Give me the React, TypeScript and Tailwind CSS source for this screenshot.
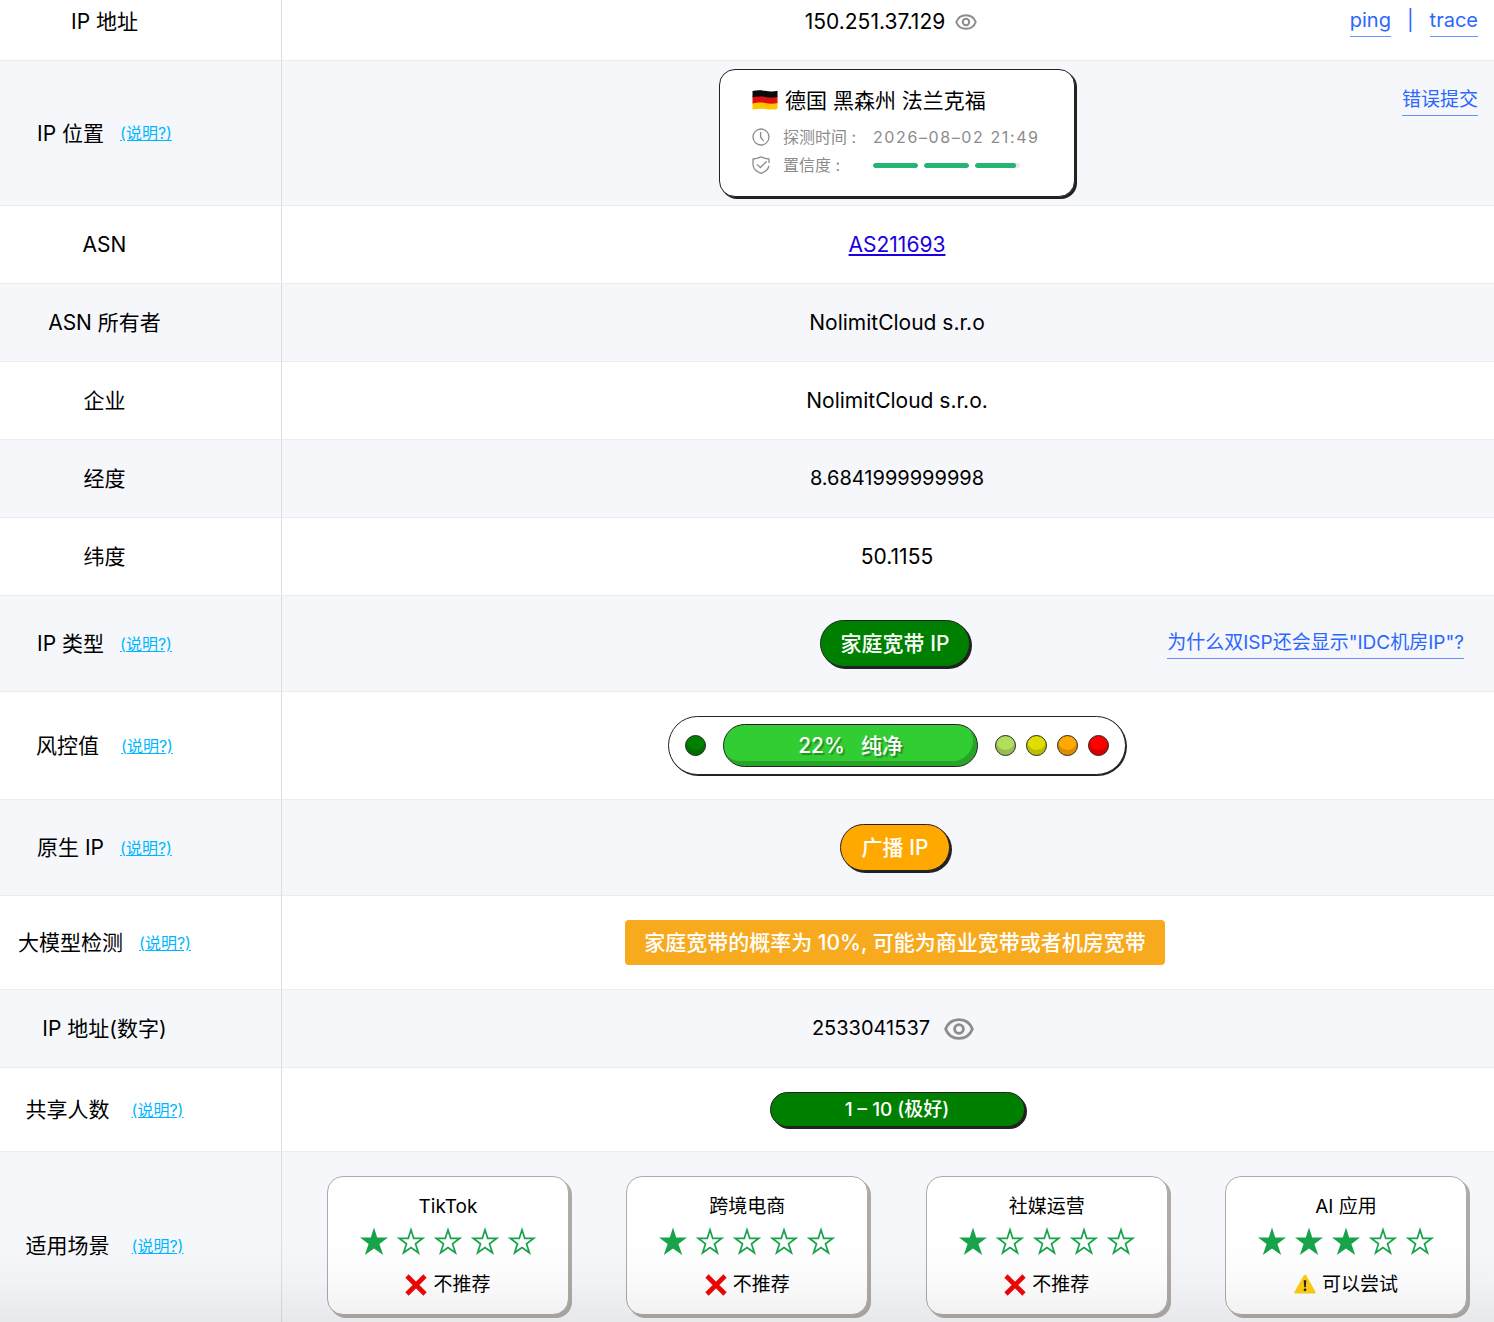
import type { ReactNode } from 'react';
import clsx from 'clsx';

interface RowProps {
  label: string;
  help?: boolean;
  wideGap?: boolean;
  cellClass?: string;
  aside?: ReactNode;
  children: ReactNode;
}

interface Scene {
  name: string;
  stars: number;
  recommended: boolean;
  verdict: string;
}

const SCENES: Scene[] = [
  { name: 'TikTok', stars: 1, recommended: false, verdict: '不推荐' },
  { name: '跨境电商', stars: 1, recommended: false, verdict: '不推荐' },
  { name: '社媒运营', stars: 1, recommended: false, verdict: '不推荐' },
  { name: 'AI 应用', stars: 3, recommended: true, verdict: '可以尝试' },
];

// Confidence segments, in percent
const CONFIDENCE = [100, 100, 92];

const RISK_DOTS = ['bg-[#b2dd5e]', 'bg-[#dede00]', 'bg-[#ffa800]', 'bg-[#ff0000]'];

const FILLED_STAR = 'M14 .6 17.2 10.500H28L19.400 16.900 23.200 28 14 21.600 4.800 28 8.600 16.900 0 10.500H10.800Z';
const HOLLOW_STAR = 'M14 2.800 16.700 11.300H25.800L18.500 16.700 21.400 25.800 14 20.500 6.600 25.800 9.500 16.700 2.200 11.300H11.300Z';

function EyeIcon({ className }: { className: string }) {
  return (
    <svg viewBox="0 0 30 22" className={className} fill="none" stroke="#8c8c8c" strokeWidth="2.800">
      <path d="M1.600 11C4 4.800 9 1.600 15 1.600S26 4.800 28.400 11C26 17.200 21 20.400 15 20.400S4 17.200 1.600 11Z" />
      <circle cx="15" cy="11" r="4.400" />
    </svg>
  );
}

function GermanFlag() {
  return (
    <svg viewBox="0 0 26 20" className="mb-0.5 h-5 w-[26px]">
      <path fill="#ffc400" d="M.5 12.500C5 11.500 9 11.800 13 12.600S21 13.600 25.500 12.500V18.700C21 20 17 19.600 13 19S5 18.500.5 19.600Z" />
      <path fill="#e01010" d="M.5 6.500C5 5.500 9 5.800 13 6.600S21 7.600 25.500 6.500V13C21 14.300 17 13.800 13 13S5 12.200.5 13.400Z" />
      <path fill="#0b0b0b" d="M.5 1C5 0 9 .2 13 .8S21 1.800 25.500 .8V6.900C21 8.200 17 7.700 13 6.900S5 6.200.5 7.300Z" />
    </svg>
  );
}

function ClockIcon() {
  return (
    <svg viewBox="0 0 18 18" className="size-[18px]" fill="none" stroke="#8c8c8c" strokeWidth="1.300" strokeLinecap="round">
      <circle cx="9" cy="9" r="8" />
      <path d="M8.600 4.300V9.200L11.400 12.600" />
    </svg>
  );
}

function ShieldIcon() {
  return (
    <svg viewBox="0 0 18 18" className="size-[18px]" fill="none" stroke="#8c8c8c" strokeWidth="1.300" strokeLinecap="round" strokeLinejoin="round">
      <path d="M17 6.500V3L13.200 2.400C11.500 2.100 10.300 .9 9 .9S6.500 2.100 4.800 2.400L1 3V8.500C1 13 4.500 15.600 9 17.300 13 15.800 16 13.600 16.800 10.500" />
      <path d="M5.200 8.600 8.300 11.500 14.300 5.800" />
    </svg>
  );
}

function Star({ filled }: { filled: boolean }) {
  return (
    <svg viewBox="0 0 28 28" className="size-7">
      {filled ? (
        <path d={FILLED_STAR} fill="#16a34a" />
      ) : (
        <path d={HOLLOW_STAR} fill="none" stroke="#16a34a" strokeWidth="1.700" />
      )}
    </svg>
  );
}

function CrossIcon() {
  return (
    <svg viewBox="0 0 22 22" className="size-[22px]" stroke="#f00505" strokeWidth="4.600">
      <path d="M2 2 20 20M20 2 2 20" />
    </svg>
  );
}

function WarningIcon() {
  return (
    <svg viewBox="0 0 22 20" className="mb-0.5 h-5 w-[22px]">
      <path fill="#ffcc14" d="M11 .8C11.600 .8 12 1.100 12.300 1.600L21.500 17.700C22 18.600 21.500 19.500 20.500 19.500H1.500C.5 19.500 0 18.600.5 17.700L9.700 1.600C10 1.100 10.400.8 11 .8Z" />
      <path fill="#222" d="M9.700 6.200H12.300L11.800 13.300H10.200Z" />
      <circle cx="11" cy="15.800" r="1.400" fill="#222" />
    </svg>
  );
}

function TextLink({ children }: { children: ReactNode }) {
  return (
    <a href="#" className="border-b border-[#2b66ff]/70 pb-1 text-[#2b66ff]">
      {children}
    </a>
  );
}

function HelpLink() {
  return (
    <a href="#" className="text-base text-[#00b7ff] underline">
      (说明?)
    </a>
  );
}

function Row({ label, help, wideGap, cellClass = 'py-6', aside, children }: RowProps) {
  return (
    <tr className="even:bg-[#f5f7fb]">
      <th scope="row" className={clsx('w-[282px] border-r border-b border-r-[#dcdde1] border-b-[#ebecef] pr-[72px] align-middle font-normal', cellClass)}>
        <div className={clsx('flex items-center justify-center whitespace-nowrap', wideGap ? 'gap-[22px]' : 'gap-4')}>
          <span>{label}</span>
          {help && <HelpLink />}
        </div>
      </th>
      <td className={clsx('border-b border-[#ebecef] pl-[18px] align-middle', cellClass)}>
        <div className="grid grid-cols-[1fr_auto_1fr] items-center">
          <div className="col-start-2 flex items-center justify-center">{children}</div>
          {aside && <div className="self-stretch text-right">{aside}</div>}
        </div>
      </td>
    </tr>
  );
}

function Pill({ className, children }: { className: string; children: ReactNode }) {
  return (
    <span className={clsx('flex items-center justify-center rounded-full border border-[#222] font-medium text-white shadow-[2px_2px_0_#222]', className)}>
      {children}
    </span>
  );
}

function LocationCard() {
  return (
    <div className="flex h-32 w-[356px] flex-col rounded-2xl border border-[#222] bg-white pt-4 pl-8 shadow-[2px_2px_0_#222]">
      <div className="flex items-center gap-[7px]">
        <GermanFlag />
        <span>德国 黑森州 法兰克福</span>
      </div>
      <div className="mt-2.5 grid grid-cols-[18px_90px_1fr] gap-y-1 text-base leading-6 text-[#8c8c8c]">
        <span className="flex items-center"><ClockIcon /></span>
        <span className="pl-[13px]">探测时间 :</span>
        <time className="pl-[13px] tracking-widest">2026–08–02 21:49</time>
        <span className="flex items-center"><ShieldIcon /></span>
        <span className="pl-[13px]">置信度 :</span>
        <span className="flex items-center gap-1.5 pl-[13px]">
          {CONFIDENCE.map((value, i) => (
            <span key={i} className="h-[5px] w-[45px] overflow-hidden rounded-full bg-[#e5e9ee]">
              <span className="block h-full rounded-full bg-[#22b573]" style={{ width: `${value}%` }} />
            </span>
          ))}
        </span>
      </div>
    </div>
  );
}

function RiskDot({ color }: { color: string }) {
  return <span className={clsx('size-[21px] rounded-full border border-[#222] shadow-[inset_0_-5px_0_rgba(0,0,0,0.15)]', color)} />;
}

function RiskMeter() {
  return (
    <div className="flex h-[59px] items-center rounded-full border border-[#222] bg-white px-4 shadow-[1px_1px_0_#222]">
      <RiskDot color="bg-[#008000]" />
      <div className="mx-[17px] flex h-[43px] w-[255px] items-center justify-center gap-4 rounded-full border border-[#222] bg-[#32cd32] font-medium text-white shadow-[inset_-4px_-5px_0_rgba(0,0,0,0.2)] text-shadow-[2px_2px_1px_rgba(0,0,0,0.3)]">
        <span>22%</span>
        <span>纯净</span>
      </div>
      <div className="flex gap-2.5">
        {RISK_DOTS.map((color) => (
          <RiskDot key={color} color={color} />
        ))}
      </div>
    </div>
  );
}

function SceneCard({ scene }: { scene: Scene }) {
  return (
    <div className="flex h-[139px] w-[242px] flex-col items-center rounded-2xl border border-[#aeaaa6] bg-white pt-4 text-[19px] leading-7 shadow-[3px_3px_0_#aeaaa6]">
      <span>{scene.name}</span>
      <div className="mt-1.5 flex gap-[9px]">
        {[1, 2, 3, 4, 5].map((n) => (
          <Star key={n} filled={n <= scene.stars} />
        ))}
      </div>
      <div className="mt-4 flex items-center gap-1.5">
        {scene.recommended ? <WarningIcon /> : <CrossIcon />}
        <span>{scene.verdict}</span>
      </div>
    </div>
  );
}

export default function App() {
  return (
    <main className="relative bg-white font-[Inter,'Noto_Sans_CJK_SC',sans-serif] text-[21px] leading-[29px] text-black">
      <table className="w-full table-fixed border-separate border-spacing-0">
        <tbody>
          <Row
            label="IP 地址"
            cellClass="pt-[7px] pb-6"
            aside={
              <div className="pr-4 text-xl leading-[27px] text-[#2b66ff]">
                <TextLink>ping</TextLink>
                <span className="mx-4">|</span>
                <TextLink>trace</TextLink>
              </div>
            }
          >
            <span className="mr-3 flex items-center gap-2.5">
              150.251.37.129
              <button type="button" aria-label="显示"><EyeIcon className="h-4 w-[22px]" /></button>
            </span>
          </Row>
          <Row
            label="IP 位置"
            help
            cellClass="py-2"
            aside={<div className="pt-4 pr-4 text-[19px]"><TextLink>错误提交</TextLink></div>}
          >
            <LocationCard />
          </Row>
          <Row label="ASN">
            <a href="#" className="text-[#1a00e0] underline">AS211693</a>
          </Row>
          <Row label="ASN 所有者">NolimitCloud s.r.o</Row>
          <Row label="企业">NolimitCloud s.r.o.</Row>
          <Row label="经度"><span className="text-xl leading-[29px]">8.6841999999998</span></Row>
          <Row label="纬度">50.1155</Row>
          <Row
            label="IP 类型"
            help
            aside={<div className="pt-2 pr-[30px] text-[19px]"><TextLink>为什么双ISP还会显示"IDC机房IP"?</TextLink></div>}
          >
            <Pill className="mr-1 h-[47px] bg-[#008000] px-5">家庭宽带 IP</Pill>
          </Row>
          <Row label="风控值" help wideGap>
            <RiskMeter />
          </Row>
          <Row label="原生 IP" help>
            <Pill className="mr-1 h-[47px] bg-[#ffa800] px-[21px]">广播 IP</Pill>
          </Row>
          <Row label="大模型检测" help>
            <span className="mr-1 rounded bg-[#f8aa1f] px-[19px] py-2 font-medium text-white">
              家庭宽带的概率为 10%, 可能为商业宽带或者机房宽带
            </span>
          </Row>
          <Row label="IP 地址(数字)">
            <span className="mr-2 flex items-center gap-3.5 text-xl leading-[29px]">
              2533041537
              <button type="button" aria-label="显示"><EyeIcon className="h-[22px] w-[30px]" /></button>
            </span>
          </Row>
          <Row label="共享人数" help wideGap>
            <Pill className="h-[35px] w-[255px] bg-[#008000] text-[19px]">1 – 10 (极好)</Pill>
          </Row>
          <tr className="bg-[#f5f7fb]">
            <th scope="row" className="border-r border-[#dcdde1] pt-6 pr-[72px] pb-[7px] font-normal">
              <div className="flex items-center justify-center gap-[22px] whitespace-nowrap">
                <span>适用场景</span>
                <HelpLink />
              </div>
            </th>
            <td className="pt-6 pr-[27px] pb-[7px] pl-[45px]">
              <div className="flex justify-between">
                {SCENES.map((scene) => (
                  <SceneCard key={scene.name} scene={scene} />
                ))}
              </div>
            </td>
          </tr>
        </tbody>
      </table>
      <div className="pointer-events-none absolute inset-x-0 bottom-0 h-20 bg-linear-to-t from-black/6 via-black/2 to-transparent" />
    </main>
  );
}
